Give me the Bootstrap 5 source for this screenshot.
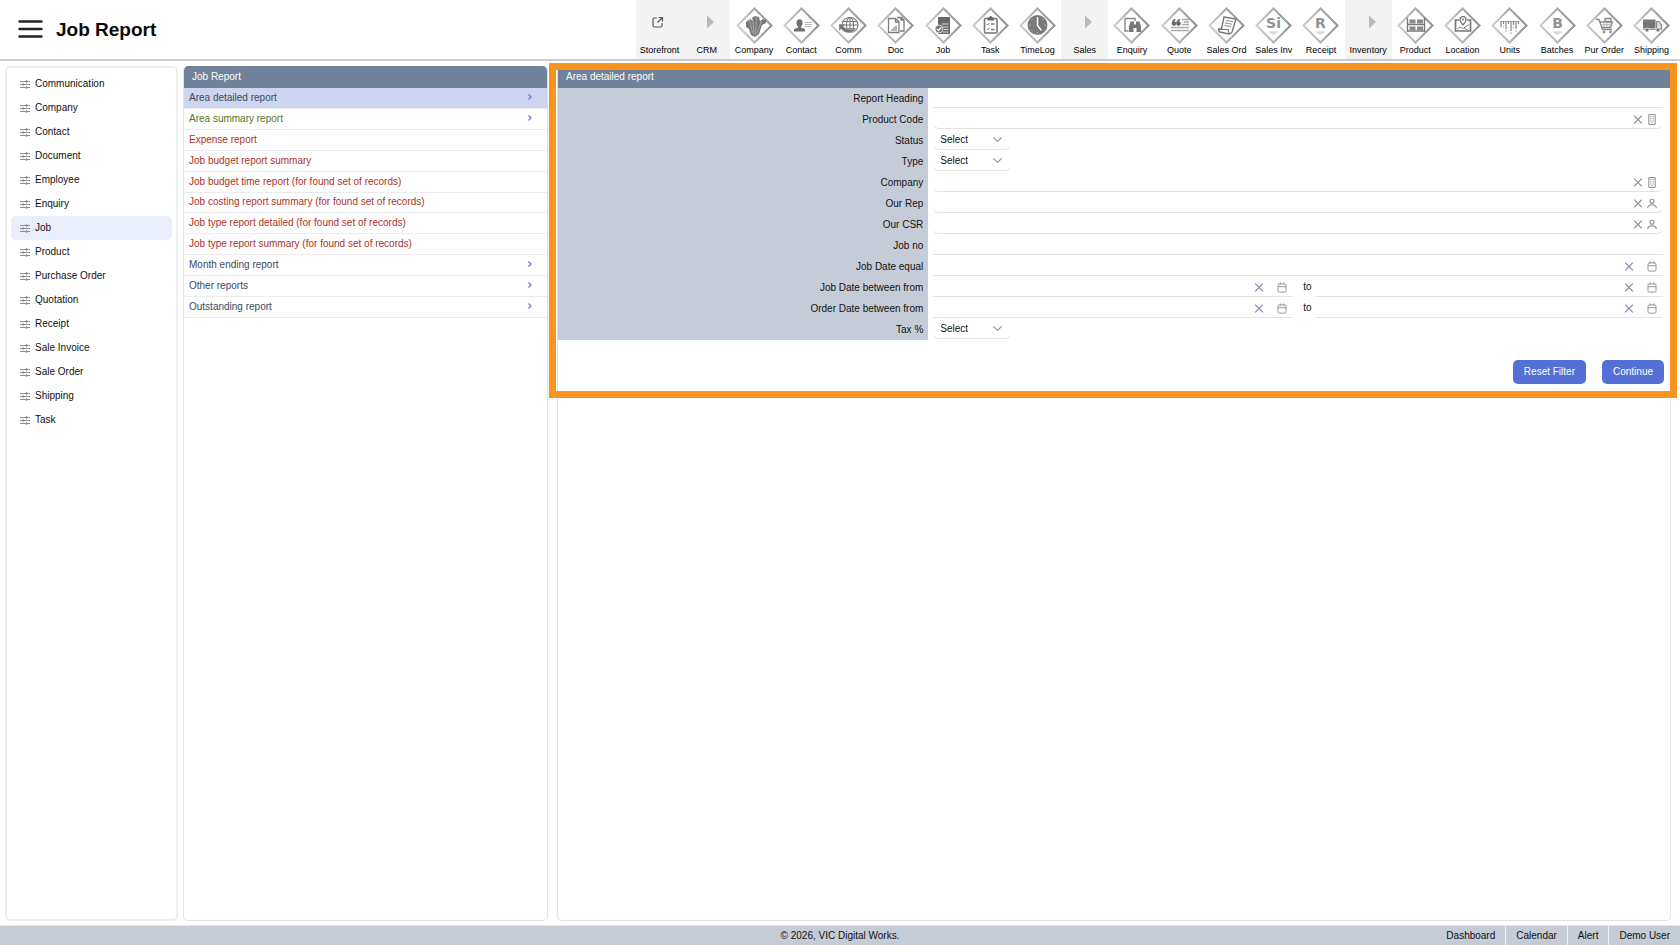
<!DOCTYPE html>
<html lang="en">
<head>
<meta charset="utf-8">
<meta name="viewport" content="width=device-width, initial-scale=1">
<title>Job Report</title>
<link href="https://cdn.jsdelivr.net/npm/bootstrap@5.3.0/dist/css/bootstrap.min.css" rel="stylesheet">
<style>
  body { font-family: "Liberation Sans", Arial, sans-serif; font-size: 10px; line-height: 12px; color: #111; background: #fff; }
  a { text-decoration: none; color: inherit; }
  button.bare { border: 0; background: none; padding: 0; display: flex; align-items: center; justify-content: center; color: #8d8d8d; }
  .topbar { height: 61px; border-bottom: 2px solid #ccc; padding-left: 18px; padding-right: 5px; }
  .page-title { font-size: 19px; line-height: 24px; font-weight: 700; color: #0a0a0a; margin: 0 0 0 13px; }
  .modules { flex: 0 1 1039px; font-size: 9px; line-height: 11px; color: #000; }
  .module { flex: 1 1 0; min-width: 0; height: 59px; padding-top: 7px; white-space: nowrap; }
  .module svg { width: 37px; height: 37px; margin-bottom: 1px; }
  .module.group { background: #f3f3f3; }
  .workspace { padding: 5px 9px 4px 5px; min-height: 0; }
  .panel { border: 1px solid #dfe2ea; border-radius: 5px; background: #fff; }
  .side { width: 173px; border: 2px solid #eee; padding: 4px; margin-right: 5px; }
  .side a { height: 24px; padding-left: 9px; border-radius: 5px; color: #111; }
  .side a.active { background: #eaedfa; }
  .side svg { width: 10px; height: 9px; margin-right: 5px; }
  .reports { width: 365px; margin-right: 9px; overflow: hidden; border-top: 0; }
  .panel-head { height: 22px; background: #708299; color: #fff; padding: 0 8px; font-size: 10px; line-height: 22px; font-weight: 400; margin: 0; }
  .report-list { display: grid; grid-template-rows: repeat(11, 1fr); height: 230px; color: #3a4a5e; }
  .report-list a { padding: 0 14px 0 5px; border-bottom: 1px solid #ececef; }
  .report-list a.active { background: #ced5f0; }
  .report-list .ok { color: #55771a; }
  .report-list .off { color: #ad3229; }
  .report-list svg { margin-bottom: 2px; }
  .detail { position: relative; min-width: 0; border-top: 0; }
  .detail .panel-head { border-radius: 4px 4px 0 0; }
  .highlight { position: absolute; inset: -3px -7px auto -9px; height: 335px; border: 7px solid #f7941e; pointer-events: none; }
  .field { height: 21px; }
  .field > label { width: 370px; flex: 0 1 33.3%; background: #c6ccd7; color: #111; text-align: right; padding-right: 5px; line-height: 22px; }
  .field > div { padding: 0 7px 0 5px; }
  .line { border-bottom: 1px solid #e3e3e3; height: 19px; margin-top: 1px; }
  .line.soft { border-radius: 0 0 6px 6px; }
  .line input { border: 0; outline: 0; background: transparent; flex: 1 1 0; min-width: 0; height: 18px; padding: 0 6px; font-size: 10px; }
  .line.from { flex: 0 1 360px; }
  .line .bare { width: 14px; height: 18px; }
  .line .bare svg { width: 10px; height: 11px; }
  .line.date .bare { width: 23px; color: #7e8aa8; }
  .line.date .bare + .bare { color: #999; }
  .to { width: 22px; padding-left: 10px; line-height: 20px; }
  .form-select { width: 78px; height: 20px; padding: 2px 18px 1px 7px; font-size: 10px; line-height: 16px; color: #111; border: 0; border-bottom: 1px solid #e3e3e3; border-radius: 0 0 6px 6px; background-size: 11px 11px; background-position: right 8px center;
    background-image: url("data:image/svg+xml,%3Csvg xmlns='http://www.w3.org/2000/svg' viewBox='0 0 11 11'%3E%3Cpath d='M1.500 3.500l4 4 4-4' fill='none' stroke='%23999' stroke-width='1.200'/%3E%3C/svg%3E"); }
  .actions { padding: 20px 6px 0 0; gap: 16px; }
  .actions .btn { height: 24px; padding: 0 11px; font-size: 10px; line-height: 12px; border: 0; border-radius: 5px; background: #5470d6; color: #fff; }
  .foot { height: 20px; background: #c6ccd6; color: #111; border-top: 1px solid #e4e7ec; line-height: 20px; }
  .foot nav a { padding: 0 10px; border-right: 1px solid #f0f2f5; }
  .foot nav a:last-child { border-right: 0; }
</style>
</head>
<body class="d-flex flex-column vh-100 overflow-hidden">

<svg width="0" height="0" class="position-absolute" aria-hidden="true">
  <defs>
    <linearGradient id="rim" x1="0" y1="0.6" x2="1" y2="0.4"><stop offset="0" stop-color="#cfcfcf"/><stop offset="1" stop-color="#8f8f8f"/></linearGradient>
    <symbol id="dia" viewBox="0 0 37 37"><path d="M18.500 1.500L35.500 18.500L18.500 35.500L1.500 18.500Z" fill="#fff" stroke="url(#rim)" stroke-width="2"/></symbol>
    <symbol id="arrow" viewBox="0 0 37 37"><path d="M19 8.500l7 6.500-7 6.500z" fill="#b9b9b9"/></symbol>
    <symbol id="sliders" viewBox="0 0 10 9"><path d="M0 1.500h10M0 4.500h10M0 7.500h10" stroke="#8c8c8c" stroke-width="1"/><path d="M6.500 0v3M3 3v3M6.500 6v3" stroke="#999" stroke-width="1.200"/></symbol>
    <symbol id="x" viewBox="0 0 10 11"><path d="M1.200 1.700l7.600 7.600M8.800 1.700L1.200 9.300" fill="none" stroke="currentColor" stroke-width="1.200"/></symbol>
    <symbol id="bldg" viewBox="0 0 10 11"><path d="M1.800.6h6.400v9.800H1.800z" fill="none" stroke="currentColor" stroke-width="1"/><path d="M3.800 2v6M6.200 2v6M5 8v2" fill="none" stroke="currentColor" stroke-width="1" stroke-dasharray="1.200 1"/></symbol>
    <symbol id="person" viewBox="0 0 10 11"><circle cx="5" cy="3.200" r="2" fill="none" stroke="currentColor" stroke-width="1.100"/><path d="M.7 10c.2-2.400 1.700-3.200 4.300-3.200S9.100 7.600 9.300 10" fill="none" stroke="currentColor" stroke-width="1.100"/></symbol>
    <symbol id="cal" viewBox="0 0 10 11"><rect x="1" y="1.900" width="8" height="8.200" rx="1.200" fill="none" stroke="currentColor"/><path d="M1 4.700h8M3.200.4v2.400M6.800.4v2.400" fill="none" stroke="currentColor"/></symbol>
    <symbol id="chev" viewBox="0 0 6 8"><path d="M1.500 1.500L4 4 1.500 6.500" fill="none" stroke="#6479d4" stroke-width="1.200"/></symbol>
  </defs>
</svg>

<header class="topbar d-flex align-items-center justify-content-between flex-shrink-0">
  <div class="d-flex align-items-center">
    <button class="bare" aria-label="Menu"><svg width="25" height="20" viewBox="0 0 25 20"><path d="M1.500 1.500h22M1.500 9h22M1.500 16.500h22" stroke="#222" stroke-width="2.400" stroke-linecap="round"/></svg></button>
    <h1 class="page-title">Job Report</h1>
  </div>
  <nav class="modules d-flex align-self-start" aria-label="Modules">
    <a href="#" class="module group d-flex flex-column align-items-center"><svg viewBox="0 0 37 37"><path d="M16 11h-2.500a1.500 1.500 0 0 0-1.500 1.500v6a1.500 1.500 0 0 0 1.500 1.500h6a1.500 1.500 0 0 0 1.500-1.500V16M17.500 10.500h4v4M21.500 10.500l-5 5" fill="none" stroke="#555" stroke-width="1.200"/></svg><span>Storefront</span></a>
    <a href="#" class="module group d-flex flex-column align-items-center"><svg><use href="#arrow"/></svg><span>CRM</span></a>
    <a href="#" class="module d-flex flex-column align-items-center"><svg viewBox="0 0 37 37"><use href="#dia"/><path d="M10 15l4-3 3 2 -1-3 3-2 4 1 1 4 3-2 3 1 0 3-4 2-3 9-4 3-4-2-2-6-3-2z" fill="#777"/><path d="M17 14l1 14M20.500 10l-1 18M13.500 13l3 13M25.500 14l-4.500 12" stroke="#bbb" stroke-width=".7" fill="none"/></svg><span>Company</span></a>
    <a href="#" class="module d-flex flex-column align-items-center"><svg viewBox="0 0 37 37"><use href="#dia"/><ellipse cx="16.500" cy="16" rx="3" ry="3.800" fill="#707070"/><path d="M15 18h3v2.500l4 1.500v2.500H11V22l4-1.500z" fill="#707070"/><path d="M22 15.500h7M22 17.500h7M22 19.500h6" stroke="#bbb"/></svg><span>Contact</span></a>
    <a href="#" class="module d-flex flex-column align-items-center"><svg viewBox="0 0 37 37"><use href="#dia"/><g fill="none" stroke="#777" stroke-width="1.100"><ellipse cx="20" cy="18" rx="8" ry="7.500"/><ellipse cx="20" cy="18" rx="3.600" ry="7.500"/><path d="M13 14.500h14M12 18h16M13 21.500h14M20 10.500v15"/></g><path d="M9 17h7l-2.500 2.500c3 3 9 3.500 13 1.500-3 6-11 6.500-15.500 1L9 24z" fill="#777" stroke="#fff" stroke-width=".4"/></svg><span>Comm</span></a>
    <a href="#" class="module d-flex flex-column align-items-center"><svg viewBox="0 0 37 37"><use href="#dia"/><g fill="none" stroke="#7d7d7d" stroke-width="1.300"><path d="M11.500 11.500h7l3.500 3.500v10.500H11.500zM18.500 11.500V15H22"/><path d="M20 10.500h4.500L27 13v11h-4M24 10.500V13h3"/></g><path d="M15 24v-2M17 24v-4M19 24v-5.500" stroke="#888" stroke-width="1.300"/></svg><span>Doc</span></a>
    <a href="#" class="module d-flex flex-column align-items-center"><svg viewBox="0 0 37 37"><use href="#dia"/><path d="M13 10h12v17H13z" fill="#666"/><path d="M17 17h6.500M18 20h5.500M19 22.500h4.500M18 25h5.500" stroke="#ddd" stroke-width="1"/><circle cx="14" cy="22" r="4" fill="#777" stroke="#fff" stroke-width=".7"/><path d="M12 22l1.500 1.700 2.800-3.200" fill="none" stroke="#fff" stroke-width="1.200"/></svg><span>Job</span></a>
    <a href="#" class="module d-flex flex-column align-items-center"><svg viewBox="0 0 37 37"><use href="#dia"/><rect x="12.500" y="11.500" width="12.500" height="14.500" rx="1" fill="none" stroke="#777" stroke-width="1.600"/><path d="M15.500 10.500h1.700a1.500 1.500 0 0 1 3 0h1.700v3h-6.400z" fill="#666"/><path d="M14.800 17l1 1 1.500-2M14.800 22l1 1 1.500-2" fill="none" stroke="#777"/><path d="M19 17h3.500M19 22.500h3.500" stroke="#777" stroke-width="1.300"/></svg><span>Task</span></a>
    <a href="#" class="module d-flex flex-column align-items-center"><svg viewBox="0 0 37 37"><use href="#dia"/><circle cx="18.500" cy="18" r="10" fill="#7a7a7a"/><path d="M18.500 10v8.500l4 5" fill="none" stroke="#fff" stroke-width="1.400"/><g stroke="#ccc" stroke-width=".9"><path d="M10 18h1.500M25.500 18H27M18.500 25v1.500M12.500 12l1 1M24.500 12l-1 1M12.500 24l1-1"/></g></svg><span>TimeLog</span></a>
    <a href="#" class="module group d-flex flex-column align-items-center"><svg><use href="#arrow"/></svg><span>Sales</span></a>
    <a href="#" class="module d-flex flex-column align-items-center"><svg viewBox="0 0 37 37"><use href="#dia"/><path d="M15.500 24H12V11.500h10V14" fill="none" stroke="#888" stroke-width="1.400"/><path d="M17.500 14.500h3.500v3h2v-3h3.500l1.500 5V25h-4.500v-4h-3v4H16v-5.500z" fill="#777"/></svg><span>Enquiry</span></a>
    <a href="#" class="module d-flex flex-column align-items-center"><svg viewBox="0 0 37 37"><use href="#dia"/><path d="M14 12q-3 1-3 4.500a2 2 0 1 0 2-2q0-1 1.500-1.800zM18.500 12q-3 1-3 4.500a2 2 0 1 0 2-2q0-1 1.500-1.800z" fill="#666" stroke="#666" stroke-width=".6"/><path d="M21 12.500h7M23 15h5M21 17.500h7M10 20.500h18M10 23.500h18" stroke="#aaa" stroke-width="1.300"/></svg><span>Quote</span></a>
    <a href="#" class="module d-flex flex-column align-items-center"><svg viewBox="0 0 37 37"><use href="#dia"/><path d="M16 10l12 2-4 13q-1 2-3 2l-9-2q-2-1-1.500-3h3z" fill="#fff" stroke="#777" stroke-width="1.400"/><path d="M11 22.500h9q0 3 2 4" fill="none" stroke="#777" stroke-width="1.200"/><path d="M18 13.500l7 1.200M17 16l7 1.200M16.500 18.500l6.500 1.200" stroke="#888"/></svg><span>Sales Ord</span></a>
    <a href="#" class="module d-flex flex-column align-items-center"><svg viewBox="0 0 37 37"><use href="#dia"/><text x="18.500" y="21" text-anchor="middle" font-size="14" font-weight="700" fill="#929292" font-family="DejaVu Sans">Si</text><path d="M14 25h9M15.500 26h6M17 27h3" stroke="#ccc"/></svg><span>Sales Inv</span></a>
    <a href="#" class="module d-flex flex-column align-items-center"><svg viewBox="0 0 37 37"><use href="#dia"/><text x="18.500" y="21" text-anchor="middle" font-size="14" font-weight="700" fill="#929292" font-family="DejaVu Sans">R</text><path d="M14 25h9M15.500 26h6M17 27h3" stroke="#ccc"/></svg><span>Receipt</span></a>
    <a href="#" class="module group d-flex flex-column align-items-center"><svg><use href="#arrow"/></svg><span>Inventory</span></a>
    <a href="#" class="module d-flex flex-column align-items-center"><svg viewBox="0 0 37 37"><use href="#dia"/><path d="M10.500 11v14M27.500 11v14M10 17.500h18M10 24h18" stroke="#777" stroke-width="1.400"/><path d="M12.500 12.500h6v4h-6zM20 12.500h6v4h-6zM12.500 19.500h6v3.500h-6zM20 19.500h6v3.500h-6z" fill="#888"/></svg><span>Product</span></a>
    <a href="#" class="module d-flex flex-column align-items-center"><svg viewBox="0 0 37 37"><use href="#dia"/><path d="M15 13h-3.500v11h15V13H23" fill="none" stroke="#777" stroke-width="1.700"/><path d="M19 18q-3-3.200-3-5.300a3 3 0 0 1 6 0q0 2.100-3 5.300z" fill="#fff" stroke="#777" stroke-width="1.300"/><circle cx="19" cy="12.500" r="1" fill="#777"/><path d="M13 22l3-2 3 1.500 6-4M20 21l4 2" fill="none" stroke="#888"/></svg><span>Location</span></a>
    <a href="#" class="module d-flex flex-column align-items-center"><svg viewBox="0 0 37 37"><use href="#dia"/><path d="M9.500 14.500h18" stroke="#aaa"/><path d="M10 14v6M12.500 14v3M15 14v8M17.500 14v3M20 14v10M22.500 14v4M25 14v8M27.500 14v3" stroke="#888" stroke-width="1.200"/><path d="M15 23v2M20 25v2M25 23v2M12.500 18.500v2M22.500 19.500v2" stroke="#bbb" stroke-width="1.200"/></svg><span>Units</span></a>
    <a href="#" class="module d-flex flex-column align-items-center"><svg viewBox="0 0 37 37"><use href="#dia"/><text x="18.500" y="21" text-anchor="middle" font-size="14" font-weight="700" fill="#929292" font-family="DejaVu Sans">B</text><path d="M14 25h9M15.500 26h6M17 27h3" stroke="#ccc"/></svg><span>Batches</span></a>
    <a href="#" class="module d-flex flex-column align-items-center"><svg viewBox="0 0 37 37"><use href="#dia"/><path d="M10 12.500h3l3.500 10H26M14 15h12.500l-2 5.500H16M19 11.500h6v3h-6z" fill="none" stroke="#888" stroke-width="1.300"/><path d="M15.500 17.700h10M18 15v5M21 15v5M24 15v5" stroke="#aaa" stroke-width=".8"/><circle cx="18" cy="25" r="1.300" fill="#888"/><circle cx="24.500" cy="25" r="1.300" fill="#888"/></svg><span>Pur Order</span></a>
    <a href="#" class="module d-flex flex-column align-items-center"><svg viewBox="0 0 37 37"><use href="#dia"/><path d="M10 12.500h12.500v9H10z" fill="#777"/><path d="M23.500 14.500h2.500l2.500 3.500v4h-5z" fill="#ddd" stroke="#888" stroke-width="1.200"/><path d="M10 22.500h18.500" stroke="#999"/><circle cx="14" cy="23" r="2" fill="#777" stroke="#fff" stroke-width=".6"/><circle cx="25" cy="23" r="2" fill="#777" stroke="#fff" stroke-width=".6"/></svg><span>Shipping</span></a>
  </nav>
</header>

<main class="workspace d-flex flex-grow-1">
  <nav class="panel side flex-shrink-0 d-flex flex-column" aria-label="Report categories">
    <a href="#" class="d-flex align-items-center"><svg><use href="#sliders"/></svg>Communication</a>
    <a href="#" class="d-flex align-items-center"><svg><use href="#sliders"/></svg>Company</a>
    <a href="#" class="d-flex align-items-center"><svg><use href="#sliders"/></svg>Contact</a>
    <a href="#" class="d-flex align-items-center"><svg><use href="#sliders"/></svg>Document</a>
    <a href="#" class="d-flex align-items-center"><svg><use href="#sliders"/></svg>Employee</a>
    <a href="#" class="d-flex align-items-center"><svg><use href="#sliders"/></svg>Enquiry</a>
    <a href="#" class="d-flex align-items-center active"><svg><use href="#sliders"/></svg>Job</a>
    <a href="#" class="d-flex align-items-center"><svg><use href="#sliders"/></svg>Product</a>
    <a href="#" class="d-flex align-items-center"><svg><use href="#sliders"/></svg>Purchase Order</a>
    <a href="#" class="d-flex align-items-center"><svg><use href="#sliders"/></svg>Quotation</a>
    <a href="#" class="d-flex align-items-center"><svg><use href="#sliders"/></svg>Receipt</a>
    <a href="#" class="d-flex align-items-center"><svg><use href="#sliders"/></svg>Sale Invoice</a>
    <a href="#" class="d-flex align-items-center"><svg><use href="#sliders"/></svg>Sale Order</a>
    <a href="#" class="d-flex align-items-center"><svg><use href="#sliders"/></svg>Shipping</a>
    <a href="#" class="d-flex align-items-center"><svg><use href="#sliders"/></svg>Task</a>
  </nav>

  <section class="panel reports flex-shrink-0">
    <h2 class="panel-head">Job Report</h2>
    <div class="report-list">
      <a href="#" class="active d-flex align-items-center justify-content-between">Area detailed report<svg width="6" height="8"><use href="#chev"/></svg></a>
      <a href="#" class="ok d-flex align-items-center justify-content-between">Area summary report<svg width="6" height="8"><use href="#chev"/></svg></a>
      <a href="#" class="off d-flex align-items-center">Expense report</a>
      <a href="#" class="off d-flex align-items-center">Job budget report summary</a>
      <a href="#" class="off d-flex align-items-center">Job budget time report (for found set of records)</a>
      <a href="#" class="off d-flex align-items-center">Job costing report summary (for found set of records)</a>
      <a href="#" class="off d-flex align-items-center">Job type report detailed (for found set of records)</a>
      <a href="#" class="off d-flex align-items-center">Job type report summary (for found set of records)</a>
      <a href="#" class="d-flex align-items-center justify-content-between">Month ending report<svg width="6" height="8"><use href="#chev"/></svg></a>
      <a href="#" class="d-flex align-items-center justify-content-between">Other reports<svg width="6" height="8"><use href="#chev"/></svg></a>
      <a href="#" class="d-flex align-items-center justify-content-between">Outstanding report<svg width="6" height="8"><use href="#chev"/></svg></a>
    </div>
  </section>

  <section class="panel detail flex-grow-1">
    <h2 class="panel-head">Area detailed report</h2>
    <form>
      <div class="field d-flex"><label for="heading">Report Heading</label><div class="flex-grow-1"><div class="line d-flex"><input id="heading" type="text"></div></div></div>
      <div class="field d-flex"><label for="product">Product Code</label><div class="flex-grow-1"><div class="line soft d-flex pe-1"><input id="product" type="text"><button type="button" class="bare" aria-label="Clear"><svg><use href="#x"/></svg></button><button type="button" class="bare" aria-label="Find product"><svg><use href="#bldg"/></svg></button></div></div></div>
      <div class="field d-flex"><label for="status">Status</label><div class="flex-grow-1"><select id="status" class="form-select"><option>Select</option></select></div></div>
      <div class="field d-flex"><label for="type">Type</label><div class="flex-grow-1"><select id="type" class="form-select"><option>Select</option></select></div></div>
      <div class="field d-flex"><label for="company">Company</label><div class="flex-grow-1"><div class="line soft d-flex pe-1"><input id="company" type="text"><button type="button" class="bare" aria-label="Clear"><svg><use href="#x"/></svg></button><button type="button" class="bare" aria-label="Find company"><svg><use href="#bldg"/></svg></button></div></div></div>
      <div class="field d-flex"><label for="rep">Our Rep</label><div class="flex-grow-1"><div class="line soft d-flex pe-1"><input id="rep" type="text"><button type="button" class="bare" aria-label="Clear"><svg><use href="#x"/></svg></button><button type="button" class="bare" aria-label="Find person"><svg><use href="#person"/></svg></button></div></div></div>
      <div class="field d-flex"><label for="csr">Our CSR</label><div class="flex-grow-1"><div class="line soft d-flex pe-1"><input id="csr" type="text"><button type="button" class="bare" aria-label="Clear"><svg><use href="#x"/></svg></button><button type="button" class="bare" aria-label="Find person"><svg><use href="#person"/></svg></button></div></div></div>
      <div class="field d-flex"><label for="jobno">Job no</label><div class="flex-grow-1"><div class="line d-flex"><input id="jobno" type="text"></div></div></div>
      <div class="field d-flex"><label for="jobdate">Job Date equal</label><div class="flex-grow-1"><div class="line date d-flex"><input id="jobdate" type="text"><button type="button" class="bare" aria-label="Clear"><svg><use href="#x"/></svg></button><button type="button" class="bare" aria-label="Pick date"><svg><use href="#cal"/></svg></button></div></div></div>
      <div class="field d-flex"><label for="jobfrom">Job Date between from</label><div class="flex-grow-1 d-flex"><div class="line date from d-flex"><input id="jobfrom" type="text"><button type="button" class="bare" aria-label="Clear"><svg><use href="#x"/></svg></button><button type="button" class="bare" aria-label="Pick date"><svg><use href="#cal"/></svg></button></div><label for="jobto" class="to">to</label><div class="line date d-flex flex-grow-1"><input id="jobto" type="text"><button type="button" class="bare" aria-label="Clear"><svg><use href="#x"/></svg></button><button type="button" class="bare" aria-label="Pick date"><svg><use href="#cal"/></svg></button></div></div></div>
      <div class="field d-flex"><label for="ordfrom">Order Date between from</label><div class="flex-grow-1 d-flex"><div class="line date from d-flex"><input id="ordfrom" type="text"><button type="button" class="bare" aria-label="Clear"><svg><use href="#x"/></svg></button><button type="button" class="bare" aria-label="Pick date"><svg><use href="#cal"/></svg></button></div><label for="ordto" class="to">to</label><div class="line date d-flex flex-grow-1"><input id="ordto" type="text"><button type="button" class="bare" aria-label="Clear"><svg><use href="#x"/></svg></button><button type="button" class="bare" aria-label="Pick date"><svg><use href="#cal"/></svg></button></div></div></div>
      <div class="field d-flex"><label for="tax">Tax %</label><div class="flex-grow-1"><select id="tax" class="form-select"><option>Select</option></select></div></div>
      <div class="actions d-flex justify-content-end"><button type="reset" class="btn">Reset Filter</button><button type="button" class="btn">Continue</button></div>
    </form>
    <div class="highlight"></div>
  </section>
</main>

<footer class="foot d-flex flex-shrink-0">
  <div class="col"></div>
  <div>© 2026, VIC Digital Works.</div>
  <nav class="col d-flex justify-content-end" aria-label="Shortcuts"><a href="#">Dashboard</a><a href="#">Calendar</a><a href="#">Alert</a><a href="#">Demo User</a></nav>
</footer>
<script src="https://cdn.jsdelivr.net/npm/bootstrap@5.3.0/dist/js/bootstrap.bundle.min.js"></script>
</body>
</html>
